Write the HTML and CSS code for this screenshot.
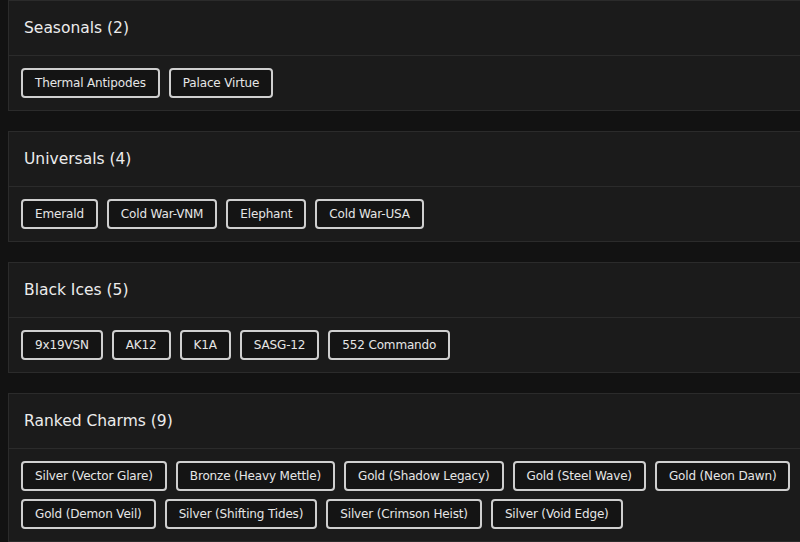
FILE: index.html
```html
<!DOCTYPE html>
<html lang="en">
<head>
	<meta charset="UTF-8">
	<meta name="viewport" content="width=device-width, initial-scale=1.0">
	<title>collection</title>
	<link rel="stylesheet" href="styles.css">
</head>
<body>
	<div class="panel">
		<div class="panel-head">Seasonals (2)</div>
		<div class="panel-body">
			<span class="chip">Thermal Antipodes</span>
			<span class="chip">Palace Virtue</span>
		</div>
	</div>
	<div class="panel">
		<div class="panel-head">Universals (4)</div>
		<div class="panel-body">
			<span class="chip">Emerald</span>
			<span class="chip">Cold War-VNM</span>
			<span class="chip">Elephant</span>
			<span class="chip">Cold War-USA</span>
		</div>
	</div>
	<div class="panel">
		<div class="panel-head">Black Ices (5)</div>
		<div class="panel-body">
			<span class="chip">9x19VSN</span>
			<span class="chip">AK12</span>
			<span class="chip">K1A</span>
			<span class="chip">SASG-12</span>
			<span class="chip">552 Commando</span>
		</div>
	</div>
	<div class="panel">
		<div class="panel-head">Ranked Charms (9)</div>
		<div class="panel-body">
			<span class="chip">Silver (Vector Glare)</span>
			<span class="chip">Bronze (Heavy Mettle)</span>
			<span class="chip">Gold (Shadow Legacy)</span>
			<span class="chip">Gold (Steel Wave)</span>
			<span class="chip">Gold (Neon Dawn)</span>
			<span class="chip">Gold (Demon Veil)</span>
			<span class="chip">Silver (Shifting Tides)</span>
			<span class="chip">Silver (Crimson Heist)</span>
			<span class="chip">Silver (Void Edge)</span>
		</div>
	</div>
</body>
</html>
```

FILE: styles.css
```css
* {
	margin: 0;
	padding: 0;
	box-sizing: border-box;
}
html, body {
	background-color: #121212;
	overflow: hidden;
}
body {
	padding-left: 8px;
	font-family: "DejaVu Sans", sans-serif;
	color: #e4e4e4;
}
.panel {
	margin: 0 -20px 20px 0;
	background-color: #1b1b1b;
	border: 1px solid #2b2b2b;
}
.panel-head {
	height: 55px;
	padding-left: 15px;
	line-height: 55px;
	font-size: 15.5px;
	color: #ececec;
	border-bottom: 1px solid #2b2b2b;
}
.panel-body {
	display: flex;
	flex-wrap: wrap;
	gap: 8px 9px;
	padding: 12px 12px 12px;
}
.chip {
	display: inline-block;
	height: 30px;
	padding: 0 12px;
	line-height: 26px;
	font-size: 12px;
	letter-spacing: -0.15px;
	color: #e6e6e6;
	background-color: #141414;
	border: 2px solid #cfcfcf;
	border-radius: 4px;
}
```
